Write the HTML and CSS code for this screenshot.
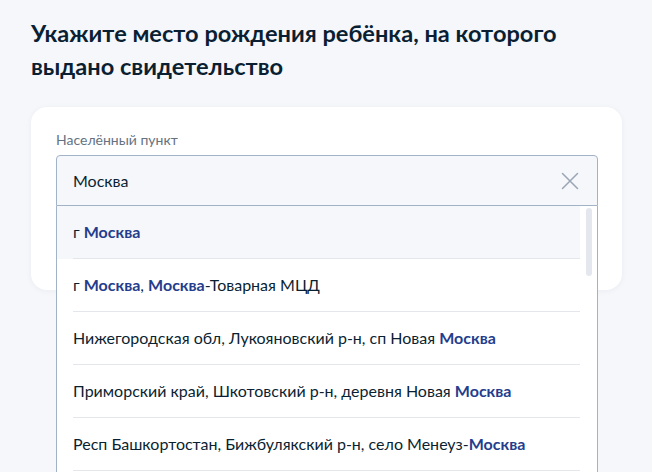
FILE: index.html
```html
<!DOCTYPE html>
<html lang="ru">
<head>
<meta charset="utf-8">
<title>Место рождения</title>
<link rel="stylesheet" href="styles.css">
</head>
<body>
<main class="page">
  <h1 class="title">Укажите место рождения ребёнка, на которого выдано свидетельство</h1>
  <section class="card">
    <label class="label" for="city">Населённый пункт</label>
    <div class="field">
      <div class="input">
        <span class="input-text" id="city">Москва</span>
        <svg class="clear" width="18" height="18" viewBox="0 0 18 18" aria-hidden="true">
          <path d="M1.5 1.5 L16.5 16.5 M16.5 1.5 L1.5 16.5" stroke="#9aa6b5" stroke-width="1.5" fill="none" stroke-linecap="round"/>
        </svg>
      </div>
      <div class="dropdown">
        <ul class="list">
          <li class="item active"><div class="item-inner">г <b>Москва</b></div></li>
          <li class="item"><div class="item-inner">г <b>Москва</b>, <b>Москва</b>-Товарная МЦД</div></li>
          <li class="item"><div class="item-inner">Нижегородская обл, Лукояновский р-н, сп Новая <b>Москва</b></div></li>
          <li class="item"><div class="item-inner">Приморский край, Шкотовский р-н, деревня Новая <b>Москва</b></div></li>
          <li class="item"><div class="item-inner">Респ Башкортостан, Бижбулякский р-н, село Менеуз-<b>Москва</b></div></li>
        </ul>
        <div class="scroll"><div class="thumb"></div></div>
      </div>
    </div>
  </section>
</main>
</body>
</html>
```
FILE: styles.css
```css
html, body {
  margin: 0;
  padding: 0;
  height: 100%;
  overflow: hidden;
}
body {
  background: #f5f7fb;
  font-family: Lato, "Open Sans", "Noto Sans", sans-serif;
  color: #0b1f33;
}
.page {
  padding: 17px 30px 0 31px;
}
.title {
  margin: 0;
  font-size: 23.6px;
  line-height: 33px;
  font-weight: 700;
  color: #0b1f33;
  max-width: 560px;
}
.card {
  margin-top: 24px;
  background: #ffffff;
  border-radius: 16px;
  box-shadow: 0 1px 6px rgba(11, 31, 51, 0.05);
  padding: 23px 24px 84px 25px;
}
.label {
  display: block;
  font-size: 14px;
  line-height: 20px;
  color: #66727f;
  margin-bottom: 5px;
}
.field {
  position: relative;
}
.input {
  display: flex;
  align-items: center;
  justify-content: space-between;
  height: 49px;
  padding: 0 18px 0 16px;
  background: #f5f7fa;
  border: 1px solid #a3b3c7;
  border-radius: 4px 4px 0 0;
}
.input-text {
  font-size: 16px;
  color: #0b1f33;
}
.clear {
  display: block;
}
.dropdown {
  position: absolute;
  top: 100%;
  left: 0;
  right: 0;
  display: flex;
  background: #ffffff;
  border: 1px solid #a3b3c7;
  border-top: none;
  border-bottom: none;
  height: 266px;
  overflow: hidden;
}
.list {
  list-style: none;
  margin: 0;
  padding: 0;
  flex: 1;
}
.item {
  padding-left: 16px;
  font-size: 16px;
  color: #0b1f33;
}
.item.active {
  background: #f5f7fa;
}
.item-inner {
  height: 52px;
  line-height: 52px;
  border-bottom: 1px solid #e3e7ec;
  white-space: nowrap;
}
.item b {
  font-weight: 700;
  color: #243d8c;
}
.scroll {
  width: 17px;
  flex: none;
  padding-top: 2px;
  display: flex;
  justify-content: center;
  align-items: flex-start;
}
.thumb {
  width: 6px;
  height: 68px;
  border-radius: 3px;
  background: #e4e8ee;
}
```
